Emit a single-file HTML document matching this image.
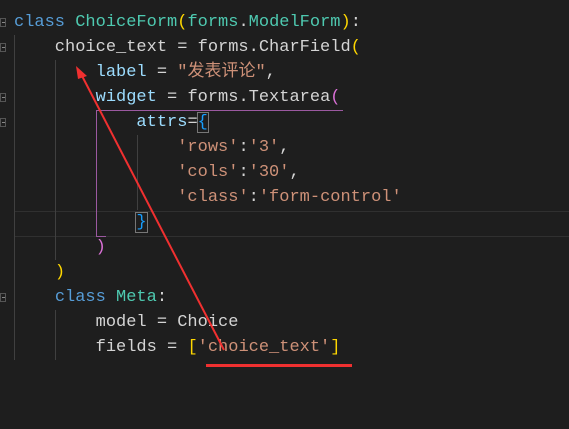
<!DOCTYPE html><html><head><style>
body{margin:0;width:569px;height:429px;background:#1e1e1e;overflow:hidden;position:relative;font-family:"Liberation Mono","Noto Sans CJK SC",monospace;font-size:17px;}
.l{position:absolute;left:14px;height:25px;line-height:25px;white-space:pre;color:#d4d4d4}
.k{color:#569cd6}.c{color:#4ec9b0}.s{color:#ce9178}.v{color:#9cdcfe}.y{color:#ffd700}.p{color:#da70d6}.b{color:#179fff}
.g{position:absolute;width:1px;background:#404040}
.f{position:absolute;left:0;width:6px;height:9px;border:1px solid #555;box-sizing:border-box}
.f:after{content:"";position:absolute;left:1px;top:3px;width:3px;height:1px;background:#888}
</style></head><body>
<div style="position:absolute;left:14px;top:211px;width:555px;height:24px;border-top:1px solid #303030;border-bottom:1px solid #303030"></div>
<div class="g" style="left:14px;top:35px;height:325px"></div>
<div class="g" style="left:55px;top:60px;height:200px"></div>
<div class="g" style="left:55px;top:310px;height:50px"></div>
<div class="g" style="left:137px;top:135px;height:75px"></div>
<div style="position:absolute;left:96px;top:110px;width:246px;height:126px;border-left:1px solid #9b59a0;border-top:1px solid #9b59a0"></div>
<div style="position:absolute;left:96px;top:236px;width:10px;height:1px;background:#9b59a0"></div>
<div class="f" style="top:18px"></div><div class="f" style="top:43px"></div><div class="f" style="top:93px"></div><div class="f" style="top:118px"></div><div class="f" style="top:293px"></div>
<div class="l" style="top:10px"><span class="k">class</span> <span class="c">ChoiceForm</span><span class="y">(</span><span class="c">forms</span>.<span class="c">ModelForm</span><span class="y">)</span>:</div>
<div class="l" style="top:35px">    choice_text = forms.CharField<span class="y">(</span></div>
<div class="l" style="top:60px">        <span class="v">label</span> = <span class="s">"发表评论"</span>,</div>
<div class="l" style="top:85px">        <span class="v">widget</span> = forms.Textarea<span class="p">(</span></div>
<div class="l" style="top:110px">            <span class="v">attrs</span>=<span class="b" style="outline:1px solid #777">{</span></div>
<div class="l" style="top:135px">                <span class="s">'rows'</span>:<span class="s">'3'</span>,</div>
<div class="l" style="top:160px">                <span class="s">'cols'</span>:<span class="s">'30'</span>,</div>
<div class="l" style="top:185px">                <span class="s">'class'</span>:<span class="s">'form-control'</span></div>
<div class="l" style="top:210px">            <span class="b" style="outline:1px solid #777">}</span></div>
<div class="l" style="top:235px">        <span class="p">)</span></div>
<div class="l" style="top:260px">    <span class="y">)</span></div>
<div class="l" style="top:285px">    <span class="k">class</span> <span class="c">Meta</span>:</div>
<div class="l" style="top:310px">        model = Choice</div>
<div class="l" style="top:335px">        fields = <span class="y">[</span><span class="s">'choice_text'</span><span class="y">]</span></div>
<svg style="position:absolute;left:0;top:0" width="569" height="429">
<line x1="224" y1="350" x2="80" y2="72" stroke="#f03030" stroke-width="2"/>
<polygon points="76,66 87,76 78,79" fill="#f03030"/>
<rect x="206" y="364" width="146" height="3" fill="#f03030"/>
</svg>
</body></html>
